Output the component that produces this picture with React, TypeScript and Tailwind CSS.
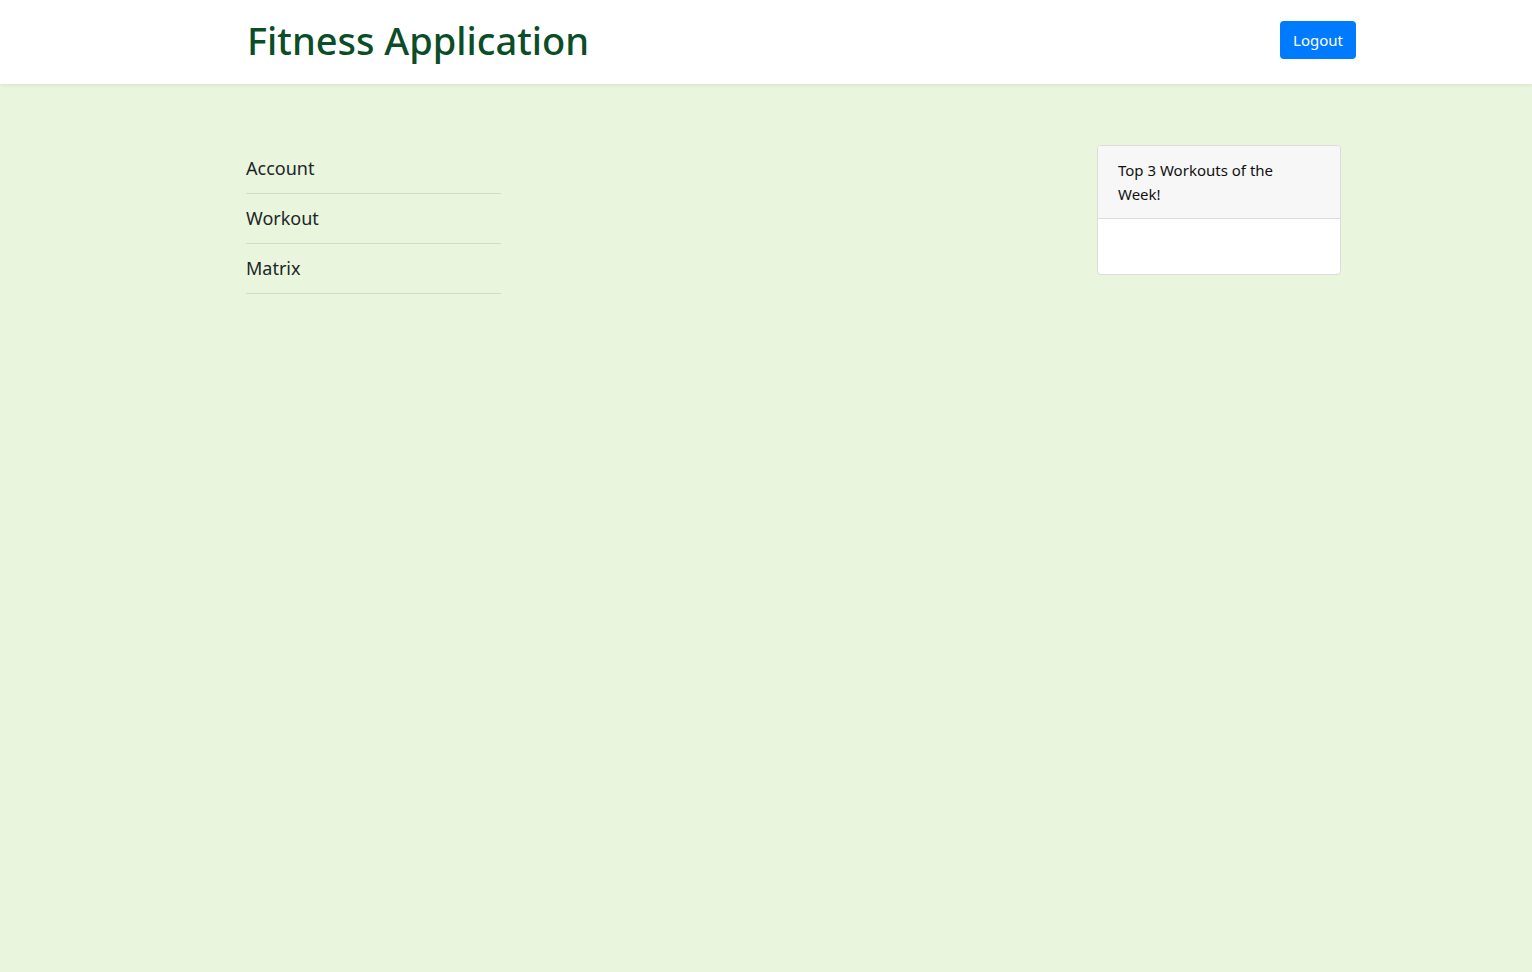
export default function App() {
  const links = ["Account", "Workout", "Matrix"];

  return (
    <div
      className="min-h-screen bg-[#e9f5dd] text-[#212529]"
      style={{ fontFamily: '"Noto Sans", "Open Sans", sans-serif' }}
    >
      {/* Header */}
      <header className="bg-white h-[84px] shadow-[0_1px_4px_rgba(0,0,0,0.08)]">
        <div className="mx-[176px] pl-[71px] flex items-center justify-between h-full">
          <h1 className="text-[38px] leading-none font-medium text-[#0b4d27] -mt-[4px]">
            Fitness Application
          </h1>
          <button className="bg-[#007bff] text-white text-[15px] h-[38px] w-[76px] rounded-[4px] -mt-[4px]">
            Logout
          </button>
        </div>
      </header>

      {/* Main */}
      <main className="flex justify-between pt-[60px] pl-[246px] pr-[191px]">
        <nav className="w-[255px] flex flex-col">
          {links.map((l) => (
            <a
              key={l}
              href="#"
              className="h-[50px] flex items-center border-b border-[#d2dccd] text-[18px] text-[#212529]"
            >
              {l}
            </a>
          ))}
        </nav>

        <div className="w-[244px] h-[130px] mt-[1px] bg-white border border-[#dcdcdc] rounded-[4px] overflow-hidden self-start">
          <div className="bg-[#f7f7f7] border-b border-[#dcdcdc] pl-[20px] pr-[50px] py-[12px] text-[15px] leading-[24px] text-[#111]">
            Top 3 Workouts of the Week!
          </div>
        </div>
      </main>
    </div>
  );
}
